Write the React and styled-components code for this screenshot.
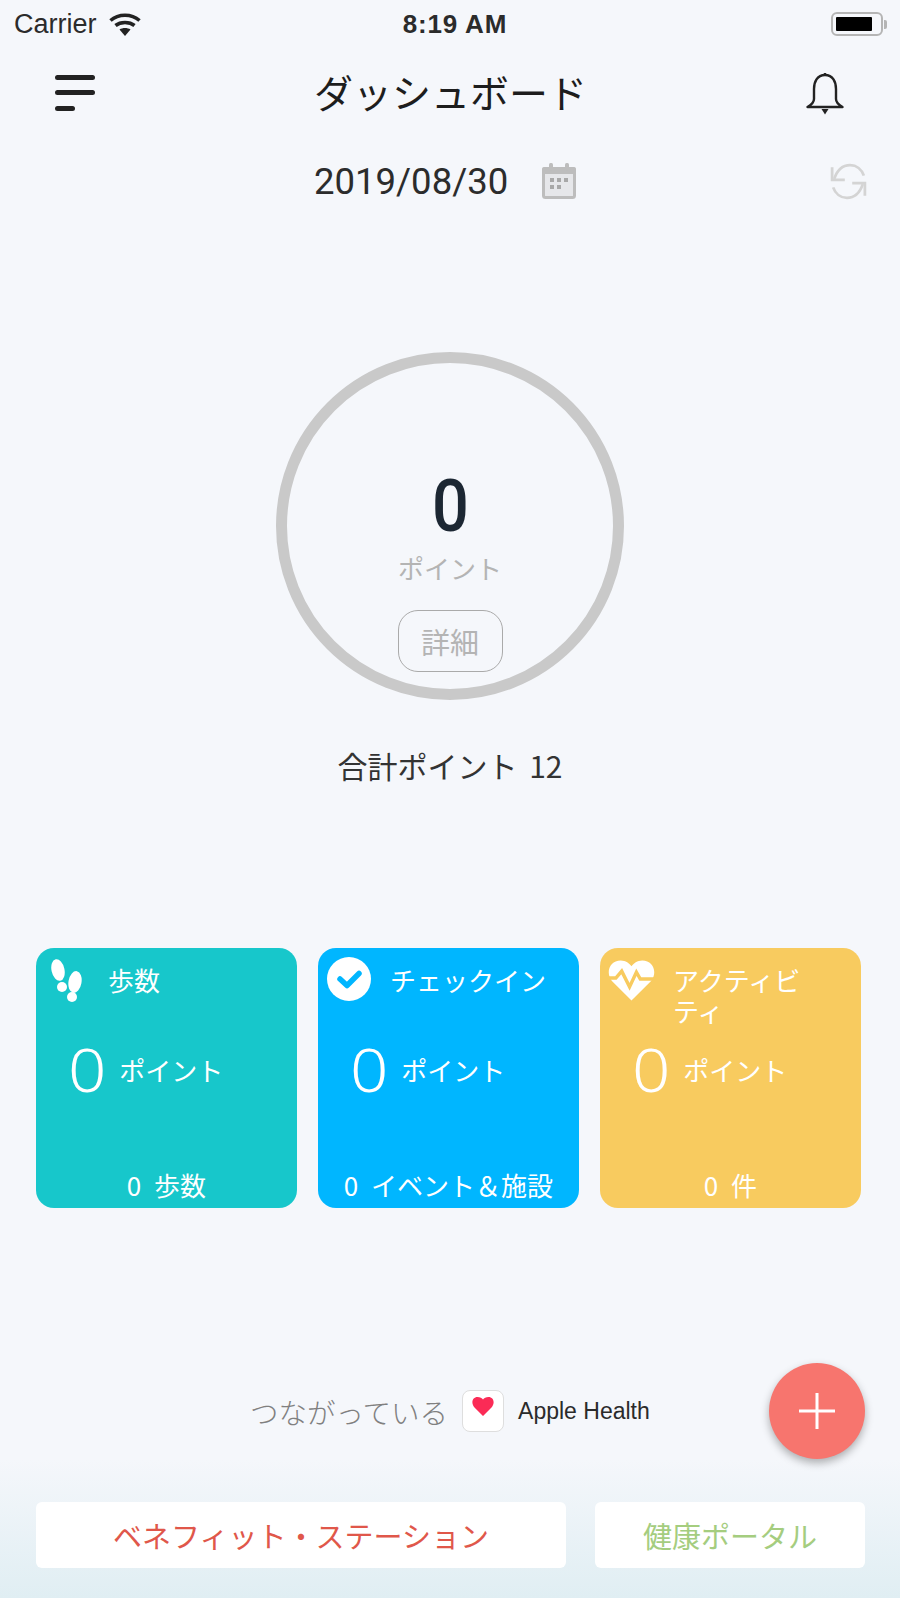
import React from 'react';
import styled, { createGlobalStyle } from 'styled-components';

const GlobalStyle = createGlobalStyle`
	html, body {
		margin: 0;
		padding: 0;
		background: #f5f7fb;
	}
	* {
		box-sizing: border-box;
	}
`;

const Page = styled.div`
	width: 900px;
	height: 1598px;
	display: flex;
	flex-direction: column;
	overflow: hidden;
	background: #f5f7fb;
	font-family: "Noto Sans CJK JP", "Noto Sans", sans-serif;
	color: #222;
`;

const StatusBar = styled.div`
	height: 48px;
	padding: 0 13px 0 14px;
	display: grid;
	grid-template-columns: 1fr auto 1fr;
	align-items: center;
	font-family: "Liberation Sans", sans-serif;
	font-size: 27px;
	color: #2b2b2b;
`;

const Carrier = styled.div`
	display: flex;
	align-items: center;
	gap: 12px;
`;

const Clock = styled.div`
	margin-left: 9px;
	font-weight: 700;
	font-size: 26px;
	letter-spacing: 0.8px;
`;

const Battery = styled.div`
	justify-self: end;
	display: flex;
	align-items: center;
	gap: 1px;
	&::after {
		content: '';
		width: 3px;
		height: 9px;
		border-radius: 0 2px 2px 0;
		background: #b5b5b5;
	}
`;

const BatteryBody = styled.div`
	width: 52px;
	height: 24px;
	padding: 3px;
	border: 2px solid #b5b5b5;
	border-radius: 6px;
	&::before {
		content: '';
		display: block;
		width: 36px;
		height: 14px;
		background: #000;
		border-radius: 1px;
	}
`;

const NavBar = styled.div`
	height: 90px;
	padding: 0 56px 0 55px;
	display: flex;
	align-items: center;
	justify-content: space-between;
`;

const Title = styled.div`
	padding-bottom: 4px;
	font-size: 39px;
	font-weight: 400;
	color: #1d1d1d;
`;

const DateRow = styled.div`
	height: 86px;
	padding: 0 33px 0 314px;
	display: flex;
	align-items: center;
	gap: 34px;
`;

const DateText = styled.div`
	font-family: Roboto, sans-serif;
	font-size: 36.5px;
	color: #2c2c2c;
`;

const RefreshSlot = styled.div`
	margin-left: auto;
	display: flex;
`;

const Ring = styled.div`
	width: 348px;
	height: 348px;
	margin: 128px auto 0;
	padding-top: 106px;
	border: 11px solid #c9c9c9;
	border-radius: 50%;
	display: flex;
	flex-direction: column;
	align-items: center;
`;

const RingValue = styled.div`
	font-family: Roboto, sans-serif;
	font-size: 72px;
	line-height: 76px;
	font-weight: 500;
	color: #1c2733;
	transform: scaleX(0.9);
`;

const RingUnit = styled.div`
	margin-top: 5px;
	font-size: 26px;
	line-height: 36px;
	font-weight: 400;
	color: #b4b4b4;
`;

const DetailButton = styled.div`
	margin-top: 24px;
	width: 105px;
	height: 62px;
	border: 1.5px solid #aaa;
	border-radius: 20px;
	display: flex;
	align-items: center;
	justify-content: center;
	font-size: 29px;
	font-weight: 400;
	color: #b4b4b4;
`;

const Total = styled.div`
	margin-top: 45px;
	text-align: center;
	font-size: 30px;
	line-height: 40px;
	font-weight: 400;
	word-spacing: 5px;
	color: #333;
`;

const Cards = styled.div`
	margin-top: 163px;
	padding: 0 39px 0 36px;
	display: grid;
	grid-template-columns: repeat(3, 261px);
	gap: 21px;
`;

const Card = styled.div`
	height: 260px;
	padding: 9px 0 0;
	border-radius: 18px;
	background: ${props => props.color};
	color: #fff;
	display: flex;
	flex-direction: column;
`;

const CardHead = styled.div`
	height: 81px;
	display: flex;
	align-items: flex-start;
`;

const CardIcon = styled.div`
	width: ${props => props.$slot}px;
	padding-left: ${props => props.$inset}px;
	padding-top: ${props => props.$top}px;
	flex: none;
	display: flex;
`;

const CardTitle = styled.div`
	width: ${props => props.$wrap}px;
	padding-top: 7px;
	font-size: 26px;
	line-height: 31px;
	font-weight: 400;
`;

const CardValue = styled.div`
	padding-left: 34px;
	display: flex;
	align-items: center;
	gap: 15px;
`;

const BigZero = styled.div`
	font-family: "Noto Sans", sans-serif;
	font-size: 60px;
	line-height: 62px;
	font-weight: 300;
	transform: scaleX(1.12);
`;

const CardUnit = styled.div`
	font-size: 26px;
	font-weight: 400;
`;

const CardFoot = styled.div`
	margin-top: auto;
	padding-bottom: 3px;
	text-align: center;
	font-size: 26px;
	line-height: 40px;
	font-weight: 400;
	word-spacing: 7px;
`;

const Connect = styled.div`
	margin-top: 155px;
	padding: 0 35px 0 250px;
	display: flex;
	align-items: center;
`;

const ConnectLabel = styled.div`
	font-size: 28.5px;
	font-weight: 300;
	color: #808080;
`;

const HealthTile = styled.div`
	width: 42px;
	height: 42px;
	margin: 0 14px 0 14px;
	padding-top: 6px;
	border: 1.5px solid #dedede;
	border-radius: 8px;
	background: #fff;
	display: flex;
	justify-content: center;
`;

const HealthName = styled.div`
	font-family: "Liberation Sans", sans-serif;
	font-size: 23px;
	color: #2b2b2b;
`;

const Fab = styled.div`
	position: relative;
	z-index: 1;
	width: 96px;
	height: 96px;
	margin-left: auto;
	border-radius: 50%;
	background: #f7756e;
	box-shadow: 0 4px 8px rgba(0, 0, 0, 0.3);
	display: flex;
	align-items: center;
	justify-content: center;
`;

const Footer = styled.div`
	flex: 1;
	padding: 43px 35px 30px 36px;
	background: linear-gradient(#f5f7fb, #e0eef3);
	display: flex;
	gap: 29px;
`;

const LinkButton = styled.div`
	width: ${props => props.width}px;
	height: 66px;
	border-radius: 6px;
	background: #fff;
	display: flex;
	align-items: center;
	justify-content: center;
	font-size: 29px;
	font-weight: 400;
	color: ${props => props.color};
`;

const WifiIcon = () => (
	<svg width="32" height="23" viewBox="0 0 32 23" fill="none" stroke="#222" strokeWidth="3.6">
		<path d="M1.5 7.5 C9.5 0.5 22.5 0.5 30.5 7.5" />
		<path d="M6.5 12.5 C11.5 8.5 20.5 8.5 25.5 12.5" />
		<path d="M16 23 L10.5 16.5 C13.5 14.5 18.5 14.5 21.5 16.5 Z" fill="#222" stroke="none" />
	</svg>
);

const MenuIcon = () => (
	<svg width="40" height="36" viewBox="0 0 40 36" fill="#222">
		<rect x="0" y="0" width="40" height="5" rx="2.5" />
		<rect x="0" y="15" width="40" height="5" rx="2.5" />
		<rect x="0" y="31" width="20" height="5" rx="2.5" />
	</svg>
);

const BellIcon = () => (
	<svg width="38" height="43" viewBox="0 0 38 43" fill="none" stroke="#222" strokeWidth="2.4">
		<path d="M19 3 C11 3 8 10 8 17 V27 C8 31 5 33 1.5 35 H36.5 C33 33 30 31 30 27 V17 C30 10 27 3 19 3 Z" strokeLinejoin="round" />
		<path d="M19 3 V1" />
		<path d="M15.5 37 H22.5 L19 42.5 Z" fill="#222" stroke="none" />
	</svg>
);

const CalendarIcon = () => (
	<svg width="34" height="36" viewBox="0 0 34 36">
		<rect x="1.5" y="5.5" width="31" height="29" rx="2" fill="#e6e7ea" stroke="#bdbdbd" strokeWidth="3" />
		<rect x="0" y="4" width="34" height="7" rx="2" fill="#bdbdbd" />
		<rect x="7" y="0" width="4" height="8" rx="1.5" fill="#bdbdbd" />
		<rect x="23" y="0" width="4" height="8" rx="1.5" fill="#bdbdbd" />
		<g fill="#a8a8a8">
			<rect x="8" y="15" width="4" height="4" />
			<rect x="15" y="15" width="4" height="4" />
			<rect x="22" y="15" width="4" height="4" />
			<rect x="8" y="22" width="4" height="4" />
			<rect x="15" y="22" width="4" height="4" />
		</g>
	</svg>
);

const RefreshIcon = () => (
	<svg width="37" height="37" viewBox="2 0 33 35" fill="none" stroke="#d4d4d4" strokeWidth="2.6">
		<path d="M5 15 C8 6 14 2 20 2 C26 2 31 6 33 12" />
		<path d="M32 20 C29 29 24 33 17 33 C11 33 6 29 4 23" />
		<path d="M3 4 V16 H15" />
		<path d="M34 31 V19 H22" />
	</svg>
);

const FeetIcon = () => (
	<svg width="31" height="43" viewBox="0 0 31 43" fill="#fff">
		<ellipse cx="7" cy="11" rx="6.5" ry="11" transform="rotate(-12 7 11)" />
		<circle cx="11" cy="28" r="5" />
		<ellipse cx="24" cy="23" rx="6.5" ry="11" transform="rotate(10 24 23)" />
		<circle cx="21" cy="38" r="5" />
	</svg>
);

const CheckIcon = () => (
	<svg width="44" height="44" viewBox="0 0 44 44">
		<circle cx="22" cy="22" r="22" fill="#fff" />
		<path d="M13 22 L20 28.5 L32 16.5" fill="none" stroke="#00b6ff" strokeWidth="5.5" strokeLinecap="round" strokeLinejoin="round" />
	</svg>
);

const PulseIcon = () => (
	<svg width="47" height="41" viewBox="0 0 48 41">
		<path d="M24 41 L4 21 C-3 12 2 0 13 0 C18 0 22 3 24 6 C26 3 30 0 35 0 C46 0 51 12 44 21 Z" fill="#fff" />
		<path d="M0 18 H8 L14 11 L22 27 L29 12 L33 19 H48" fill="none" stroke="#f8cb5f" strokeWidth="3.5" />
	</svg>
);

const HeartIcon = () => (
	<svg width="22" height="19" viewBox="0 0 22 19">
		<path d="M11 19 L2.5 10.5 C-1.5 6 0.5 0 5.5 0 C8 0 10 1 11 2.5 C12 1 14 0 16.5 0 C21.5 0 23.5 6 19.5 10.5 Z" fill="#fb2b56" />
	</svg>
);

const PlusIcon = () => (
	<svg width="36" height="36" viewBox="0 0 36 36" stroke="#fff" strokeWidth="3">
		<path d="M18 0 V36 M0 18 H36" />
	</svg>
);

const cards = [
	{ title: '歩数', color: '#17c7cb', foot: '0 歩数', slot: 72, inset: 15, top: 2, wrap: 160, icon: <FeetIcon /> },
	{ title: 'チェックイン', color: '#00b6ff', foot: '0 イベント＆施設', slot: 72, inset: 9, top: 0, wrap: 160, icon: <CheckIcon /> },
	{ title: 'アクティビティ', color: '#f8cb5f', foot: '0 件', slot: 73, inset: 8, top: 3, wrap: 150, icon: <PulseIcon /> },
];

const App = () => {
	return (
		<Page>
			<GlobalStyle />
			<StatusBar>
				<Carrier>Carrier <WifiIcon /></Carrier>
				<Clock>8:19 AM</Clock>
				<Battery><BatteryBody /></Battery>
			</StatusBar>
			<NavBar>
				<MenuIcon />
				<Title>ダッシュボード</Title>
				<BellIcon />
			</NavBar>
			<DateRow>
				<DateText>2019/08/30</DateText>
				<CalendarIcon />
				<RefreshSlot><RefreshIcon /></RefreshSlot>
			</DateRow>
			<Ring>
				<RingValue>0</RingValue>
				<RingUnit>ポイント</RingUnit>
				<DetailButton>詳細</DetailButton>
			</Ring>
			<Total>合計ポイント 12</Total>
			<Cards>
				{cards.map(card => (
					<Card key={card.title} color={card.color}>
						<CardHead>
							<CardIcon $slot={card.slot} $inset={card.inset} $top={card.top}>{card.icon}</CardIcon>
							<CardTitle $wrap={card.wrap}>{card.title}</CardTitle>
						</CardHead>
						<CardValue>
							<BigZero>0</BigZero>
							<CardUnit>ポイント</CardUnit>
						</CardValue>
						<CardFoot>{card.foot}</CardFoot>
					</Card>
				))}
			</Cards>
			<Connect>
				<ConnectLabel>つながっている</ConnectLabel>
				<HealthTile><HeartIcon /></HealthTile>
				<HealthName>Apple Health</HealthName>
				<Fab><PlusIcon /></Fab>
			</Connect>
			<Footer>
				<LinkButton width={530} color="#e0574a">ベネフィット・ステーション</LinkButton>
				<LinkButton width={270} color="#a5cd7f">健康ポータル</LinkButton>
			</Footer>
		</Page>
	);
};

export default App;
